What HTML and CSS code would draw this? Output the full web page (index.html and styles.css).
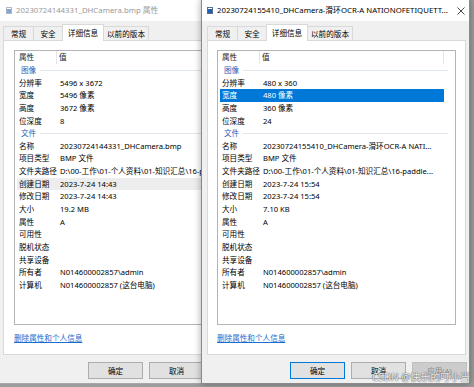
FILE: index.html
```html
<!DOCTYPE html>
<html lang="zh-CN">
<head>
<meta charset="utf-8">
<title>属性</title>
<link rel="stylesheet" href="styles.css">
</head>
<body>
<div class="desktop">

  <div class="window win-left">
    <div class="titlebar">
      <svg class="app-icon dim" width="6" height="7" viewBox="0 0 6 7"><rect x="0.5" y="0.5" width="5" height="6" fill="#fff" stroke="#8d9bb0"/><rect x="1" y="2" width="4" height="4" fill="#4f7fc0"/></svg>
      <span class="title inactive">20230724144331_DHCamera.bmp 属性</span>
    </div>
    <div class="tabs">
      <div class="tab t1">常规</div>
      <div class="tab t2">安全</div>
      <div class="tab t3 selected">详细信息</div>
      <div class="tab t4">以前的版本</div>
    </div>
    <div class="page">
      <div class="listview">
        <div class="lv-header"><div class="hc hc1">属性</div><div class="hc hc2">值</div></div>
        <div class="group"><span>图像</span><i class="gline"></i></div>
        <div class="row"><span class="k">分辨率</span><span class="v">5496 x 3672</span></div>
        <div class="row"><span class="k">宽度</span><span class="v">5496 像素</span></div>
        <div class="row"><span class="k">高度</span><span class="v">3672 像素</span></div>
        <div class="row"><span class="k">位深度</span><span class="v">8</span></div>
        <div class="group"><span>文件</span><i class="gline"></i></div>
        <div class="row"><span class="k">名称</span><span class="v">20230724144331_DHCamera.bmp</span></div>
        <div class="row"><span class="k">项目类型</span><span class="v">BMP 文件</span></div>
        <div class="row"><span class="k">文件夹路径</span><span class="v">D:\00-工作\01-个人资料\01-知识汇总\16-paddle...</span></div>
        <div class="row hover"><span class="k">创建日期</span><span class="v">2023-7-24 14:43</span></div>
        <div class="row"><span class="k">修改日期</span><span class="v">2023-7-24 14:43</span></div>
        <div class="row"><span class="k">大小</span><span class="v">19.2 MB</span></div>
        <div class="row"><span class="k">属性</span><span class="v">A</span></div>
        <div class="row"><span class="k">可用性</span><span class="v"></span></div>
        <div class="row"><span class="k">脱机状态</span><span class="v"></span></div>
        <div class="row"><span class="k">共享设备</span><span class="v"></span></div>
        <div class="row"><span class="k">所有者</span><span class="v">N014600002857\admin</span></div>
        <div class="row"><span class="k">计算机</span><span class="v">N014600002857 (这台电脑)</span></div>
      </div>
      <a class="link" href="#">删除属性和个人信息</a>
    </div>
    <div class="buttons">
      <div class="btn">确定</div>
      <div class="btn">取消</div>
      <div class="btn disabled">应用(A)</div>
    </div>
  </div>

  <div class="window win-right">
    <div class="titlebar">
      <svg class="app-icon" width="6" height="7" viewBox="0 0 6 7"><rect x="0.5" y="0.5" width="5" height="6" fill="#fff" stroke="#5a6f8f"/><rect x="1" y="2" width="4" height="4" fill="#1f5fb0"/></svg>
      <span class="title">20230724155410_DHCamera-滑环OCR-A NATIONOFETIQUETT...</span>
      <svg class="close" width="8" height="8" viewBox="0 0 8 8"><path d="M0.5 0.5 L7.5 7.5 M7.5 0.5 L0.5 7.5" stroke="#333" stroke-width="0.9" fill="none"/></svg>
    </div>
    <div class="tabs">
      <div class="tab t1">常规</div>
      <div class="tab t2">安全</div>
      <div class="tab t3 selected">详细信息</div>
      <div class="tab t4">以前的版本</div>
    </div>
    <div class="page">
      <div class="listview">
        <div class="lv-header"><div class="hc hc1">属性</div><div class="hc hc2">值</div></div>
        <div class="group"><span>图像</span><i class="gline"></i></div>
        <div class="row"><span class="k">分辨率</span><span class="v">480 x 360</span></div>
        <div class="row selected"><span class="k">宽度</span><span class="v">480 像素</span></div>
        <div class="row"><span class="k">高度</span><span class="v">360 像素</span></div>
        <div class="row"><span class="k">位深度</span><span class="v">24</span></div>
        <div class="group"><span>文件</span><i class="gline"></i></div>
        <div class="row"><span class="k">名称</span><span class="v">20230724155410_DHCamera-滑环OCR-A NATI...</span></div>
        <div class="row"><span class="k">项目类型</span><span class="v">BMP 文件</span></div>
        <div class="row"><span class="k">文件夹路径</span><span class="v">D:\00-工作\01-个人资料\01-知识汇总\16-paddle...</span></div>
        <div class="row"><span class="k">创建日期</span><span class="v">2023-7-24 15:54</span></div>
        <div class="row"><span class="k">修改日期</span><span class="v">2023-7-24 15:54</span></div>
        <div class="row"><span class="k">大小</span><span class="v">7.10 KB</span></div>
        <div class="row"><span class="k">属性</span><span class="v">A</span></div>
        <div class="row"><span class="k">可用性</span><span class="v"></span></div>
        <div class="row"><span class="k">脱机状态</span><span class="v"></span></div>
        <div class="row"><span class="k">共享设备</span><span class="v"></span></div>
        <div class="row"><span class="k">所有者</span><span class="v">N014600002857\admin</span></div>
        <div class="row"><span class="k">计算机</span><span class="v">N014600002857 (这台电脑)</span></div>
      </div>
      <a class="link" href="#">删除属性和个人信息</a>
    </div>
    <div class="buttons">
      <div class="btn default">确定</div>
      <div class="btn">取消</div>
      <div class="btn disabled">应用(A)</div>
    </div>
  </div>

  <div class="watermark">CSDN @快乐的叮小当</div>
</div>
</body>
</html>
```
FILE: styles.css
```css
* { box-sizing: border-box; margin: 0; padding: 0; }

body {
  margin: 0;
  width: 474px;
  height: 387px;
  overflow: hidden;
  background: #9d9d9d;
  font-family: "Noto Sans", "Noto Sans CJK SC", sans-serif;
  font-size: 7.6px;
  color: #000;
}

.desktop {
  position: relative;
  width: 474px;
  height: 387px;
}

.window {
  position: absolute;
  top: -1px;
  height: 385px;
  display: flex;
  flex-direction: column;
  background: #f0f0f0;
  border: 1px solid #a8a8a8;
  overflow: hidden;
}

.win-left { left: -3px; width: 271px; }
.win-right {
  left: 201px;
  width: 269px;
  border-color: #8a8a8a;
  box-shadow: 0 0 7px rgba(0, 0, 0, 0.35);
}

/* title bar */
.titlebar {
  height: 21px;
  flex: none;
  background: #fff;
  display: flex;
  align-items: center;
  gap: 4px;
  white-space: nowrap;
}
.win-left .titlebar { padding-left: 8px; }
.win-right .titlebar { padding-left: 5px; padding-right: 4px; }
.app-icon { flex: none; }
.app-icon.dim { opacity: 0.7; }
.title { font-size: 7.8px; line-height: 21px; color: #000; overflow: hidden; }
.title.inactive { color: #9a9a9a; }
.close { margin-left: auto; flex: none; }

/* tabs */
.tabs {
  height: 19px;
  flex: none;
  display: flex;
  align-items: flex-end;
  padding-left: 5px;
}
.tab {
  height: 14px;
  border: 1px solid #d9d9d9;
  border-bottom: none;
  background: #f0f0f0;
  display: flex;
  align-items: center;
  justify-content: center;
  white-space: nowrap;
  margin-right: -1px;
}
.t1 { width: 31px; }
.t2 { width: 30px; }
.t3 { width: 42px; }
.t4 { width: 46px; }
.tab.selected {
  height: 17px;
  margin-bottom: -1px;
  background: #fff;
  position: relative;
  z-index: 1;
  padding-bottom: 1px;
}

/* tab page */
.page {
  height: 315px;
  flex: none;
  margin: 0 3px 0 5px;
  background: #fff;
  border: 1px solid #d9d9d9;
  display: flex;
  flex-direction: column;
  padding: 9px 9px 0 10px;
}
.win-right .page { padding-left: 9px; }

.listview {
  height: 275px;
  flex: none;
  border: 1px solid #b4b4b4;
  overflow: hidden;
}

.lv-header {
  height: 13px;
  display: flex;
  align-items: center;
  color: #222;
}
.hc {
  height: 13px;
  line-height: 13px;
  border-right: 1px solid #e5e5e5;
  white-space: nowrap;
}
.hc1 { width: 42px; padding-left: 4px; }
.hc2 { width: 184px; padding-left: 2px; }

.row {
  height: 12.65px;
  line-height: 12.65px;
  width: 224px;
  margin-left: 2px;
  display: grid;
  grid-template-columns: 41px 1fr;
  white-space: nowrap;
}
.row .k { padding-left: 2px; overflow: hidden; }
.row .v { padding-left: 2px; overflow: hidden; }
.win-left .row { width: 184px; }
.row.selected { background: #0078d7; color: #fff; }
.row.hover { background: #ededed; }

.group {
  height: 12.65px;
  line-height: 12.65px;
  width: 230px;
  margin-left: 2px;
  padding: 0 2px 0 4px;
  display: flex;
  align-items: center;
  gap: 4px;
  color: #2e5cb8;
  white-space: nowrap;
}
.gline {
  flex: 1;
  height: 1px;
  background: #dfe5ec;
}

.link {
  margin-top: 8px;
  line-height: 11px;
  color: #1a6ccf;
  text-decoration: underline;
  align-self: flex-start;
  white-space: nowrap;
}

/* buttons */
.buttons {
  flex: none;
  display: flex;
  justify-content: flex-end;
  gap: 6px;
  padding: 7px 2px 0 0;
}
.btn {
  width: 55px;
  height: 17px;
  background: #e1e1e1;
  border: 1px solid #adadad;
  display: flex;
  align-items: center;
  justify-content: center;
  white-space: nowrap;
}
.btn.default { border-color: #0078d7; }
.btn.disabled { background: #cccccc; border-color: #bfbfbf; color: #8a8a8a; }

.watermark {
  position: absolute;
  left: 372px;
  top: 371px;
  font-size: 10px;
  line-height: 13px;
  color: rgba(255, 255, 255, 0.92);
  text-shadow: 0 0 1px #555, 0 0 1px #555;
  white-space: nowrap;
  z-index: 5;
}
```
